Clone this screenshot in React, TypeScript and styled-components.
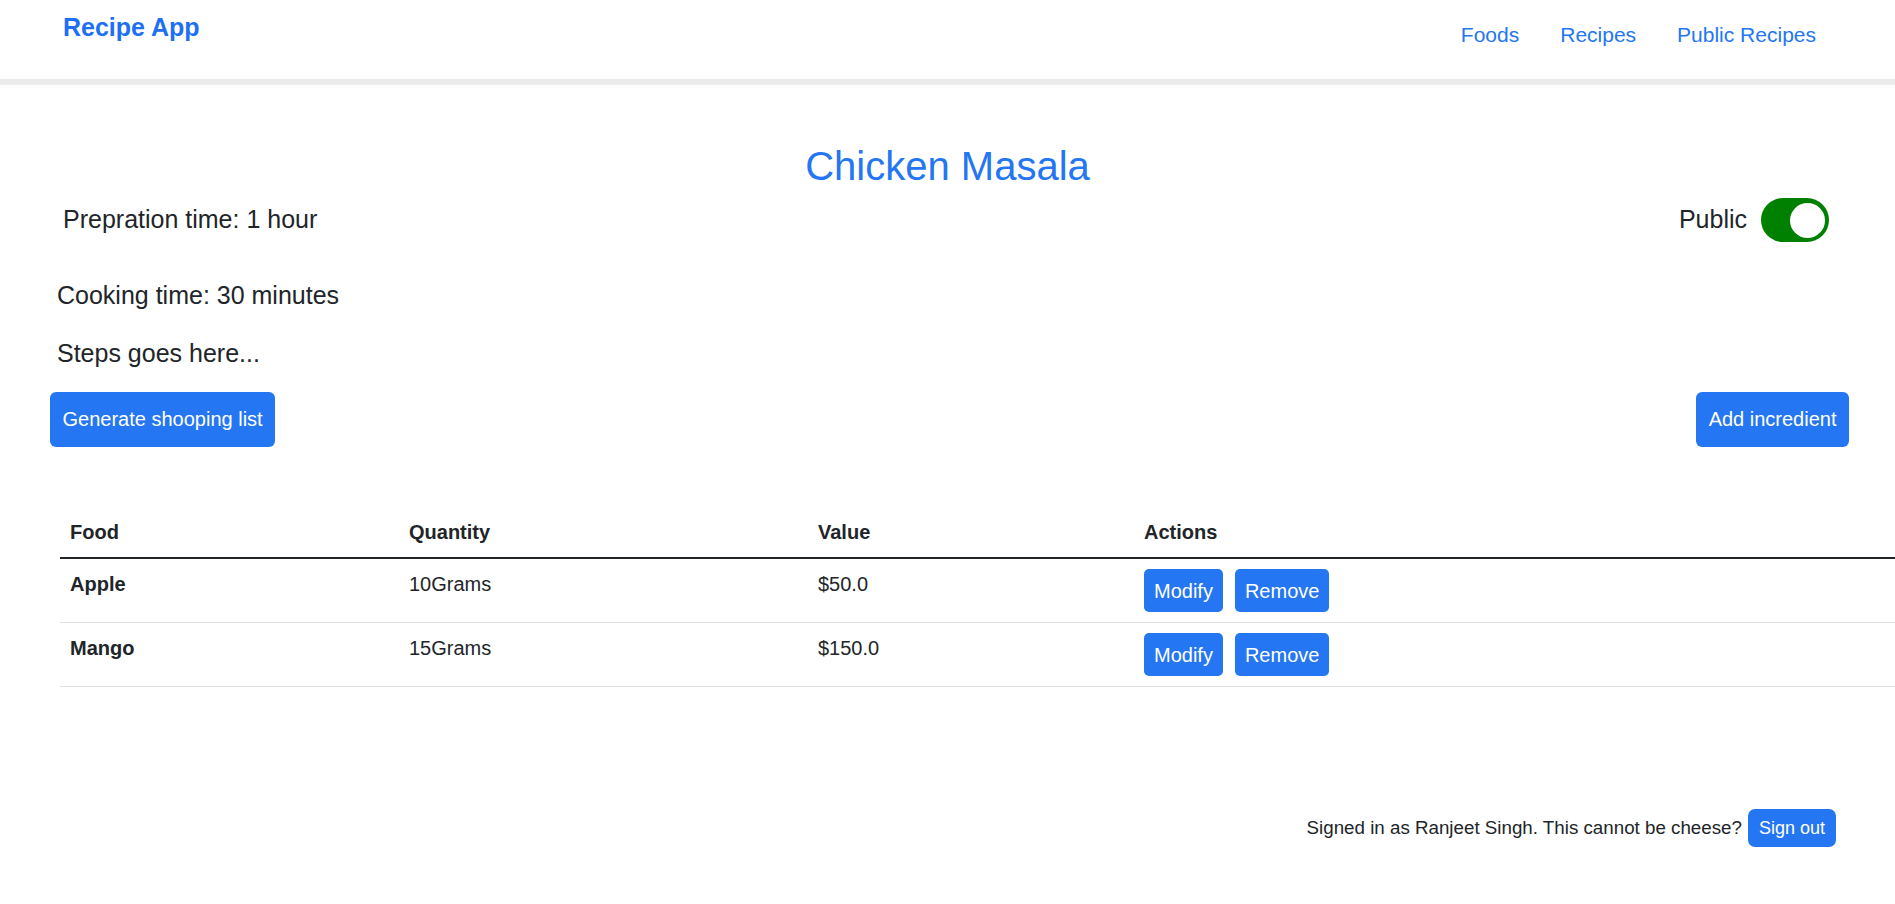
import styled, { createGlobalStyle } from 'styled-components';

const BLUE = '#2476f2';
const TEXT = '#212529';

const GlobalStyle = createGlobalStyle`
  body {
    margin: 0;
    font-family: "Liberation Sans", Arial, sans-serif;
    color: ${TEXT};
    background: #fff;
  }

  * {
    box-sizing: border-box;
  }
`;

const INGREDIENTS = [
  { id: 1, food: 'Apple', quantity: '10Grams', value: '$50.0' },
  { id: 2, food: 'Mango', quantity: '15Grams', value: '$150.0' },
];

function Navbar() {
  return (
    <Nav>
      <Brand href="#">Recipe App</Brand>
      <NavLinks>
        <li>
          <NavLink href="#">Foods</NavLink>
        </li>
        <li>
          <NavLink href="#">Recipes</NavLink>
        </li>
        <li>
          <NavLink href="#">Public Recipes</NavLink>
        </li>
      </NavLinks>
    </Nav>
  );
}

function IngredientTable() {
  return (
    <Table>
      <colgroup>
        <col style={{ width: 339 }} />
        <col style={{ width: 409 }} />
        <col style={{ width: 326 }} />
        <col />
      </colgroup>
      <thead>
        <tr>
          <Th>Food</Th>
          <Th>Quantity</Th>
          <Th>Value</Th>
          <Th>Actions</Th>
        </tr>
      </thead>
      <tbody>
        {INGREDIENTS.map((item) => (
          <tr key={item.id}>
            <Td $bold>{item.food}</Td>
            <Td>{item.quantity}</Td>
            <Td>{item.value}</Td>
            <Td>
              <Actions>
                <SmallButton>Modify</SmallButton>
                <SmallButton>Remove</SmallButton>
              </Actions>
            </Td>
          </tr>
        ))}
      </tbody>
    </Table>
  );
}

export default function App() {
  return (
    <>
      <GlobalStyle />
      <Navbar />
      <Main>
        <Title>Chicken Masala</Title>
        <InfoRow>
          <Lead>Prepration time: 1 hour</Lead>
          <PublicToggle>
            <Lead>Public</Lead>
            <Switch role="switch" aria-checked="true">
              <Knob />
            </Switch>
          </PublicToggle>
        </InfoRow>
        <Paragraph $first>Cooking time: 30 minutes</Paragraph>
        <Paragraph>Steps goes here...</Paragraph>
        <ButtonRow>
          <Button>Generate shooping list</Button>
          <Button>Add incredient</Button>
        </ButtonRow>
        <IngredientTable />
      </Main>
      <Footer>
        <span>Signed in as Ranjeet Singh. This cannot be cheese?</span>
        <SignOut>Sign out</SignOut>
      </Footer>
    </>
  );
}

const Nav = styled.nav`
  display: flex;
  justify-content: space-between;
  align-items: flex-start;
  height: 85px;
  padding: 9px 79px 0 63px;
  border-bottom: 6px solid #ebebeb;
`;

const Brand = styled.a`
  color: #1d70f5;
  font-size: 25px;
  font-weight: 700;
  line-height: 1.5;
  text-decoration: none;
`;

const NavLinks = styled.ul`
  display: flex;
  gap: 41px;
  margin: 10px 0 0;
  padding: 0;
  list-style: none;
`;

const NavLink = styled.a`
  color: ${BLUE};
  font-size: 21px;
  line-height: 31px;
  text-decoration: none;
`;

const Main = styled.main`
  display: flex;
  flex-direction: column;
`;

const Title = styled.h2`
  margin: 57px 0 8px;
  text-align: center;
  color: ${BLUE};
  font-size: 40px;
  font-weight: 400;
  line-height: 48px;
`;

const InfoRow = styled.div`
  display: flex;
  justify-content: space-between;
  align-items: center;
  padding: 0 66px 0 63px;
`;

const Lead = styled.span`
  font-size: 25px;
  line-height: 1.5;
`;

const PublicToggle = styled.div`
  display: flex;
  align-items: center;
  gap: 14px;
`;

const Switch = styled.div`
  display: flex;
  justify-content: flex-end;
  align-items: center;
  width: 68px;
  height: 44px;
  padding: 0 4px;
  border-radius: 22px;
  background: #008000;
`;

const Knob = styled.span`
  width: 35px;
  height: 35px;
  border-radius: 50%;
  background: #fff;
`;

const Paragraph = styled.p<{ $first?: boolean }>`
  margin: ${(p) => (p.$first ? '35px' : '0')} 0 20px;
  padding-left: 57px;
  font-size: 25px;
  line-height: 1.5;
`;

const ButtonRow = styled.div`
  display: flex;
  justify-content: space-between;
  padding: 0 46px 0 50px;
`;

const Button = styled.button`
  padding: 12px 12.5px;
  border: 0;
  border-radius: 6px;
  background: ${BLUE};
  color: #fff;
  font-family: inherit;
  font-size: 20px;
  line-height: 31px;
  cursor: pointer;
`;

const Table = styled.table`
  width: calc(100% - 60px);
  margin: 60px 0 0 60px;
  border-collapse: collapse;
  table-layout: fixed;
  font-size: 20px;
  line-height: 30px;
`;

const Th = styled.th`
  padding: 10px;
  text-align: left;
  font-weight: 700;
  border-bottom: 2px solid ${TEXT};
`;

const Td = styled.td<{ $bold?: boolean }>`
  padding: 10px;
  vertical-align: top;
  font-weight: ${(p) => (p.$bold ? 700 : 400)};
  border-bottom: 1px solid #dee2e6;
`;

const Actions = styled.div`
  display: flex;
  gap: 12px;
`;

const SmallButton = styled.button`
  height: 43px;
  padding: 0 10px;
  border: 0;
  border-radius: 5px;
  background: ${BLUE};
  color: #fff;
  font-family: inherit;
  font-size: 20px;
  line-height: 30px;
  cursor: pointer;
`;

const Footer = styled.footer`
  display: flex;
  justify-content: flex-end;
  align-items: center;
  gap: 6px;
  margin-top: 122px;
  padding: 0 59px 40px 0;
  font-size: 18.75px;
  line-height: 1.5;
`;

const SignOut = styled.button`
  height: 38px;
  padding: 0 11px;
  border: 0;
  border-radius: 7px;
  background: ${BLUE};
  color: #fff;
  font-family: inherit;
  font-size: 18px;
  line-height: 26px;
  cursor: pointer;
`;
